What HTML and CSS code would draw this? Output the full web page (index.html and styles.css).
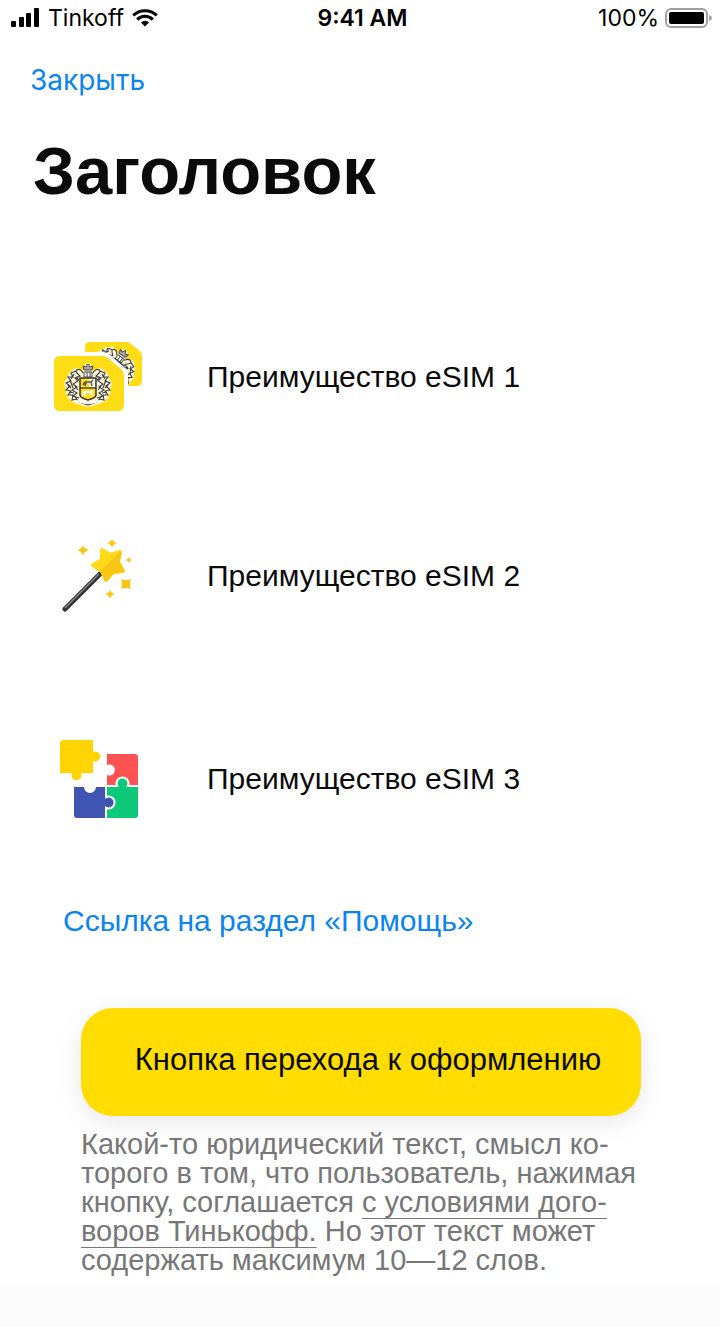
FILE: index.html
```html
<!DOCTYPE html>
<html lang="ru">
<head>
    <meta charset="UTF-8">
    <title>eSIM</title>
    <meta name="viewport" content="width=device-width, initial-scale=1.0">
    <link rel="stylesheet" href="styles.css">
</head>
<body>
<div class="status-bar">
    <div class="carrier">
        <svg width="29" height="20" viewBox="0 0 29 20" aria-hidden="true">
            <rect x="0" y="13" width="5" height="6" rx="1"/>
            <rect x="8" y="9" width="5" height="10" rx="1"/>
            <rect x="15" y="5" width="5" height="14" rx="1"/>
            <rect x="23" y="0" width="5" height="19" rx="1"/>
        </svg>
        <span>Tinkoff</span>
        <svg width="26" height="18" viewBox="0 0 26 18" fill="none" stroke="#000" stroke-width="3" aria-hidden="true">
            <path d="M1.2 6.4 A17 17 0 0 1 24.8 6.4"/>
            <path d="M5.2 10.6 A11 11 0 0 1 20.8 10.6"/>
            <path d="M9 13.4 A6 6 0 0 1 17 13.4 L13 17.600 Z" fill="#000" stroke="none"/>
        </svg>
    </div>
    <div class="time">9:41 AM</div>
    <div class="battery">
        <span>100%</span>
        <svg width="49" height="20" viewBox="0 0 49 20" aria-hidden="true">
            <rect x="1" y="1" width="41" height="18" rx="5" fill="none" stroke="#a0a0a0" stroke-width="2"/>
            <rect x="4" y="4" width="35" height="12" rx="2"/>
            <path d="M44 7 Q47 8 47 10 Q47 12 44 13 Z" fill="#a0a0a0"/>
        </svg>
    </div>
</div>

<main class="page">
    <a class="close" href="#">Закрыть</a>
    <h1>Заголовок</h1>

    <ul class="benefits">
        <li>
            <svg width="90" height="70" viewBox="0 0 90 70" aria-hidden="true">
                <defs>
                    <g id="crest-half" fill="none" stroke="#3a3a3a" stroke-width="1.1">
                        <path d="M-5 -12 C-8 -18 -14 -15 -11 -12 L-8 -9 L-13 -7 L-10 -4 L-15 -1 L-11 2 L-16 5 L-11 8 L-15 11 L-9 13"/>
                        <path d="M-12 -14 L-17 -12 L-15 -8 L-20 -8 L-17 -4 L-22 -2 L-18 1 L-22 5 L-17 6 L-20 10 L-15 10 L-16 15 L-11 14"/>
                        <path d="M-14 -11 L-17 -6 M-18 -5 L-15 3 M-20 0 L-17 3 M-19 7 L-14 8 M-12 -8 L-9 -5 M-13 1 L-10 5 M-13 12 L-9 17 L0 20"/>
                    </g>
                    <g id="crest">
                        <path d="M0 -22 L5 -19 L5 -14 L13 -17 L19 -12 L21 -7 L24 -2 L22 6 L21 12 L14 18 L0 22 L-14 18 L-21 12 L-22 6 L-24 -2 L-21 -7 L-19 -12 L-13 -17 L-5 -14 L-5 -19 Z" fill="#fff8dc"/>
                        <use href="#crest-half"/>
                        <use href="#crest-half" transform="scale(-1 1)"/>
                        <path d="M-4 -15 H4 L5 -19 L2 -18 L0 -21 L-2 -18 L-5 -19 Z" fill="#aaa" stroke="#444" stroke-width="1"/>
                        <path d="M-4 -13 H4 V-8 H-4 Z M-1 -13 V-8 M2 -13 V-8" fill="#fff" stroke="#444" stroke-width="1"/>
                        <path d="M-8 -7 H8 V10 Q8 13 0 15 Q-8 13 -8 10 Z" fill="#ffdd16" stroke="#333" stroke-width="1.5"/>
                        <path d="M1 -6 H7 V2 H1 Z" fill="#fff"/>
                        <path d="M-8 3 H8" stroke="#333" stroke-width="1.3"/>
                        <path d="M-5 0 L-3 -3 H3 L5 -5 M-2 -3 L-3 1 M3 -3 L4 1" fill="none" stroke="#555" stroke-width="1.5"/>
                        <path d="M-5 10 L-4 7 H3 L5 6 M-3 8 L-3 11 M3 8 L4 11" fill="none" stroke="#fff" stroke-width="2"/>
                        <path d="M-11 16 Q0 20 11 16" fill="none" stroke="#fff" stroke-width="2"/>
                    </g>
                </defs>
                <path d="M37 0 H74 Q76 0 78 2 L87 9 Q89 11 89 13 V39 Q89 44 84 44 H75 V28 L53 10 H32 V5 Q32 0 37 0 Z" fill="#ffdd16"/>
                <use href="#crest" transform="translate(61 25) rotate(35) scale(.95)"/>
                <path d="M6 10 H50 Q53 10 56 12 L73 27 Q75 29 75 33 V69 H6 Z" fill="#fff"/>
                <path d="M6 14 H50 Q53 14 55 16 L69 28 Q71 30 71 33 V63 Q71 69 65 69 H7 Q1 69 1 63 V20 Q1 14 7 14 Z" fill="#ffdd16"/>
                <use href="#crest" transform="translate(35 43)"/>
            </svg>
            <span>Преимущество eSIM 1</span>
        </li>
        <li>
            <svg width="90" height="73" viewBox="0 0 90 73" aria-hidden="true">
                <path d="M12 70 L48 34" stroke="#333" stroke-width="5" stroke-linecap="round"/>
                <path d="M12 69 L46 35" stroke="#888" stroke-width="1.5"/>
                <path d="M49 11 L57 16 L67 13 L65 23 L70 32 L60 33 L53 41 L49 32 L40 26 L49 21 Z" fill="#ffd91a" stroke="#ffd91a" stroke-width="4" stroke-linejoin="round"/>
                <path d="M67 14 L65 23 L70 32 L60 33 L53 41 L49 32 Z" fill="#f9c613" stroke="#f9c613" stroke-width="3" stroke-linejoin="round"/>
                <g fill="#f9c613">
                    <path d="M30 6 Q31 10 36 11 Q31 12 30 17 Q29 12 24 11 Q29 10 30 6 Z"/>
                    <path d="M59 0 Q60 3 64 4 Q60 5 59 9 Q58 5 54 4 Q58 3 59 0 Z"/>
                    <path d="M76 18 Q76 20 79 21 Q76 22 76 24 Q75 22 73 21 Q75 20 76 18 Z"/>
                    <path d="M57 51 Q58 54 62 55 Q58 56 57 60 Q56 56 52 55 Q56 54 57 51 Z"/>
                    <path d="M68 40 Q73 42 78 40 Q76 45 78 50 Q73 48 68 50 Q70 45 68 40 Z"/>
                </g>
            </svg>
            <span>Преимущество eSIM 2</span>
        </li>
        <li>
            <svg width="90" height="80" viewBox="0 0 90 80" aria-hidden="true">
                <path d="M10 1 H40 V13 A5 5 0 1 1 40 22 V34 H28 A5 5 0 1 1 19 34 H7 V4 Q7 1 10 1 Z" fill="#ffd400"/>
                <path d="M54 15 H82 Q85 15 85 18 V46 H54 V36 A5.500 5.500 0 1 0 54 26 Z" fill="#ff5252"/>
                <path d="M54 48 H66 A5 5 0 1 1 73 48 H85 V76 Q85 79 82 79 H54 Z" fill="#0cc878" stroke="#fff" stroke-width="4" paint-order="stroke"/>
                <path d="M21 48 H31 A6 6 0 0 0 43 48 H52 V60 A5 5 0 1 1 52 67 V79 H24 Q21 79 21 76 Z" fill="#4054b2" stroke="#fff" stroke-width="4" paint-order="stroke"/>
            </svg>
            <span>Преимущество eSIM 3</span>
        </li>
    </ul>

    <a class="help" href="#">Ссылка на раздел «Помощь»</a>

    <div class="action">
        <button type="button">Кнопка перехода к оформлению</button>
        <p class="legal">
            Какой-то юридический текст, смысл ко-<br>
            торого в том, что пользователь, нажимая<br>
            кнопку, соглашается <a href="#">с условиями дого-<br>
            воров Тинькофф.</a> Но этот текст может<br>
            содержать максимум 10—12 слов.
        </p>
    </div>
</main>
<footer class="bottom-bar"></footer>
</body>
</html>
```
FILE: styles.css
```css
* { box-sizing: border-box; }
body {
    margin: 0; min-height: 100vh; display: flex; flex-direction: column;
    background: #fff; color: #0b0b0b;
    font-family: "Liberation Sans", Arial, sans-serif; font-size: 30px; line-height: 36px;
}
a { color: #0a84f0; text-decoration: none; }
svg { display: block; flex: none; }

.status-bar {
    display: grid; grid-template-columns: 1fr auto 1fr; align-items: center;
    height: 36px; padding: 0 6px 0 11px;
    font-family: Inter, sans-serif; font-size: 23px; line-height: 28px; color: #000;
}
.carrier, .battery { display: flex; align-items: center; gap: 8px; }
.battery { justify-content: flex-end; gap: 6px; }
.time { font-weight: 600; }

.page { flex: 1; padding: 26px 30px 6px; }
.close { display: block; font-family: Inter, sans-serif; font-size: 28px; }
h1 { margin: 33px 3px 0; font-size: 67px; line-height: 80px; }

.benefits {
    list-style: none; margin: 131px 0 0; padding: 0 23px;
    display: flex; flex-direction: column; gap: 127px;
}
.benefits li { display: flex; align-items: center; gap: 64px; }
.help { display: block; margin: 84px 33px 0; }

.action { margin: 69px 49px 0 51px; }
button {
    display: block; width: 100%; height: 108px; padding: 0 0 4px 14px;
    border: none; border-radius: 32px; background: #ffdd00; color: #0b0b0b;
    box-shadow: 0 6px 24px rgba(0, 0, 0, 0.1);
    font: inherit; font-size: 31px; cursor: pointer;
}
.legal { margin: 14px 0 0; font-size: 29px; line-height: 29px; color: #777; white-space: nowrap; }
.legal a { color: inherit; text-decoration: underline; text-decoration-thickness: 1px; text-underline-offset: 6px; text-decoration-skip-ink: none; }

.bottom-bar { height: 43px; background: #fcfcfc; }
```
